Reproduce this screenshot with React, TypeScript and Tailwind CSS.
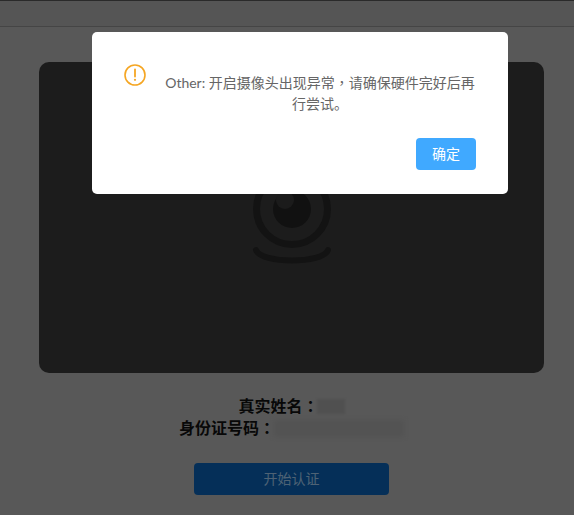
const cjk = "font-['Lato','Noto_Sans_CJK_SC',sans-serif]";
const tc = "font-['Lato','Noto_Sans_CJK_TC',sans-serif]";

function CameraIcon() {
  return (
    <svg width="90" height="100" viewBox="0 0 90 100" fill="none">
      <circle cx="45" cy="40" r="35.5" stroke="#262626" strokeWidth="7" />
      <circle cx="45" cy="40" r="19" fill="#222222" />
      <circle cx="38" cy="31" r="9" fill="#363636" />
      <path d="M9 81C14 95 76 95 81 81" stroke="#262626" strokeWidth="6" strokeLinecap="round" />
    </svg>
  );
}

function WarningIcon() {
  return (
    <svg width="22" height="22" viewBox="0 0 22 22" fill="none">
      <circle cx="11" cy="11" r="10" stroke="#f5a623" strokeWidth="1.6" />
      <path d="M11 5.5v7" stroke="#f5a623" strokeWidth="1.8" strokeLinecap="round" />
      <circle cx="11" cy="15.8" r="1.1" fill="#f5a623" />
    </svg>
  );
}

export default function App() {
  return (
    <div className={`relative h-[515px] w-[574px] overflow-hidden bg-[#b0b0b0] ${cjk}`}>
      <div className="h-[27px] border-y border-[#8a8a8a] border-t-[#555555] bg-[#ababab]" />

      <div className="flex flex-col items-center pt-[35px] pl-[9px]">
        <div className="flex h-[311px] w-[505px] items-end justify-center rounded-[10px] bg-[#383838] pb-[104px]">
          <CameraIcon />
        </div>

        <div className="mt-[22px] flex flex-col items-center text-base leading-[22px] font-bold text-[#111111]">
          <div className="flex h-[22px] items-center">
            <span>真实姓名<span className={tc}>：</span></span>
            <span className="-ml-[2px] h-[15px] w-[28px] bg-[#a0a0a0] blur-[1px]" />
          </div>
          <div className="flex h-[22px] items-center">
            <span>身份证号码<span className={tc}>：</span></span>
            <span className="-ml-[1px] h-[17px] w-[130px] bg-[#a6a6a6] blur-[2px]" />
          </div>
        </div>

        <button className="mt-[24px] h-[32px] w-[195px] rounded-[4px] bg-[#0b5fb0] text-sm text-[#9cc4e8]">
          开始认证
        </button>
      </div>

      <div className="absolute inset-0 bg-black/50" />

      <div className="absolute top-[32px] left-[92px] h-[162px] w-[416px] rounded-[5px] bg-white pt-[32px] pr-[32px] pl-[32px]">
        <div className="flex">
          <WarningIcon />
          <p className="ml-[18px] w-[312px] pt-[8px] text-center text-sm leading-[21px] text-[#666666]">
            Other: 开启摄像头出现异常<span className={tc}>，</span>请确保硬件完好后再
            <br />
            行尝试。
          </p>
        </div>
        <div className="mt-[24px] flex justify-end">
          <button className="h-[32px] w-[60px] rounded-[4px] bg-[#40a9ff] text-sm text-white">
            确定
          </button>
        </div>
      </div>
    </div>
  );
}
